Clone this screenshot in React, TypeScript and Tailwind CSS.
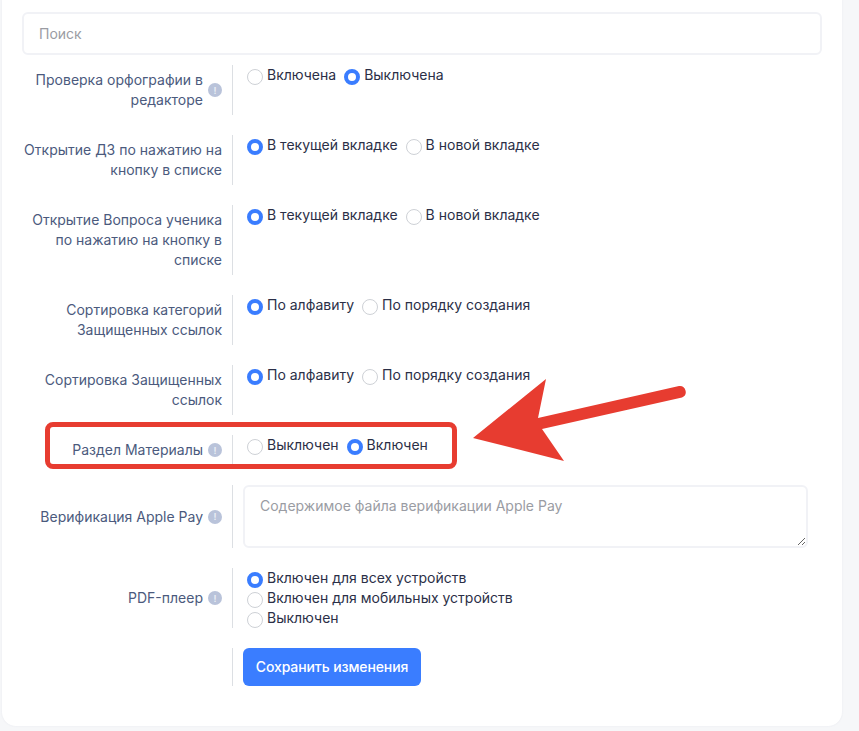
const Radio = ({ checked, label }: { checked?: boolean; label: string }) => (
  <div className="flex items-start">
    {checked ? (
      <span className="mt-[4px] ml-1 h-4 w-4 shrink-0 rounded-full border-4 border-[#3a7dff] bg-white" />
    ) : (
      <span className="mt-[4px] ml-1 h-4 w-4 shrink-0 rounded-full border border-[#ced1d6] bg-white" />
    )}
    <span className="ml-1 text-[#2b2f47]">{label}</span>
  </div>
);

const Hint = () => (
  <span className="ml-[5px] flex h-[14px] w-[14px] shrink-0 items-center justify-center rounded-full bg-[#b9c3da] text-[9px] leading-none font-bold text-white/70">
    !
  </span>
);

const Row = ({ label, hint, children }: { label?: string; hint?: boolean; children: React.ReactNode }) => (
  <div className="flex">
    <div className="flex w-[211px] shrink-0 items-center justify-end border-r border-[#dcdfe3] py-[5px] pr-[10px] text-right text-[#4b5a7d]">
      {label && <span className="whitespace-pre-line">{label}</span>}
      {hint && <Hint />}
    </div>
    <div className="flex-1 pl-[10px]">{children}</div>
  </div>
);

const App = () => {
  return (
    <div className="relative h-[731px] w-[859px] overflow-hidden bg-[#f6f7f9] font-['Inter',sans-serif] text-sm leading-5">
      <div className="ml-[2px] h-[726px] w-[840px] rounded-b-[14px] bg-white px-5 pt-3 shadow-[0_0_2px_rgba(220,222,230,0.6)]">
        <div className="flex h-[43px] items-center rounded-md border-2 border-[#f1f2f6] px-[15px] text-[#9a9ca3]">
          Поиск
        </div>
        <div className="mt-[10px] flex flex-col gap-5">
          <Row label={"Проверка орфографии в\nредакторе"} hint>
            <div className="flex gap-1">
              <Radio label="Включена" />
              <Radio checked label="Выключена" />
            </div>
          </Row>
          <Row label={"Открытие ДЗ по нажатию на\nкнопку в списке"}>
            <div className="flex gap-1">
              <Radio checked label="В текущей вкладке" />
              <Radio label="В новой вкладке" />
            </div>
          </Row>
          <Row label={"Открытие Вопроса ученика\nпо нажатию на кнопку в\nсписке"}>
            <div className="flex gap-1">
              <Radio checked label="В текущей вкладке" />
              <Radio label="В новой вкладке" />
            </div>
          </Row>
          <Row label={"Сортировка категорий\nЗащищенных ссылок"}>
            <div className="flex gap-1">
              <Radio checked label="По алфавиту" />
              <Radio label="По порядку создания" />
            </div>
          </Row>
          <Row label={"Сортировка Защищенных\nссылок"}>
            <div className="flex gap-1">
              <Radio checked label="По алфавиту" />
              <Radio label="По порядку создания" />
            </div>
          </Row>
          <Row label="Раздел Материалы" hint>
            <div className="flex gap-1">
              <Radio label="Выключен" />
              <Radio checked label="Включен" />
            </div>
          </Row>
          <Row label="Верификация Apple Pay" hint>
            <textarea
              className="block h-[63px] w-[565px] rounded-md border-2 border-[#f1f2f6] px-[15px] py-[9px] placeholder:text-[#9a9ca3]"
              placeholder="Содержимое файла верификации Apple Pay"
            />
          </Row>
          <Row label="PDF-плеер" hint>
            <div className="flex flex-col">
              <Radio checked label="Включен для всех устройств" />
              <Radio label="Включен для мобильных устройств" />
              <Radio label="Выключен" />
            </div>
          </Row>
          <Row>
            <button type="button" className="h-[38px] w-[178px] rounded-md bg-[#3a7dff] font-medium tracking-[-0.1px] text-white">
              Сохранить изменения
            </button>
          </Row>
        </div>
      </div>

      {/* annotation drawn over the screenshot */}
      <div className="absolute top-[422px] left-[45px] h-[47px] w-[412px] rounded-lg border-[5px] border-[#e73c30]" />
      <svg className="absolute top-0 left-0" width="859" height="731" viewBox="0 0 859 731" fill="none">
        <path d="M473 438L546 379L538 418L679 386A6 6 0 0 1 682 397.500L542 429L564 461Z" fill="#e73c30" />
      </svg>
    </div>
  );
};

export default App;
